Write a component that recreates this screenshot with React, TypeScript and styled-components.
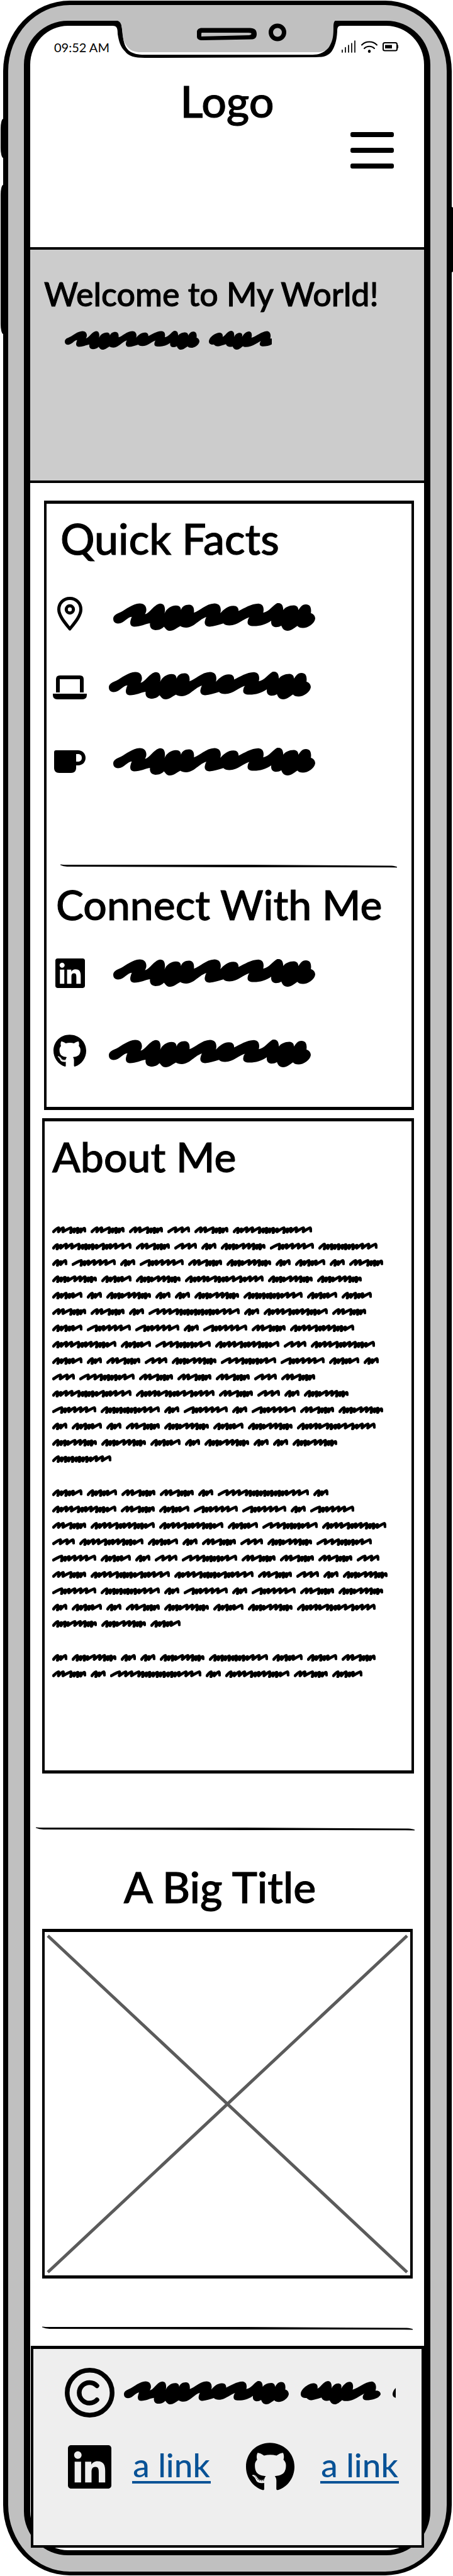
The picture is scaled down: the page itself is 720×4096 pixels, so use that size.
import React from "react";
import styled, { createGlobalStyle } from "styled-components";
import { FaGithub, FaLinkedin } from "react-icons/fa";

const INK = "#000";
const LINK = "#085296";

const GlobalStyle = createGlobalStyle`
  *, *::before, *::after { box-sizing: border-box; }
  body {
    margin: 0;
    background: #fff;
    color: ${INK};
    font-family: Lato, "Liberation Sans", sans-serif;
  }
  h1, h2, p, ul { margin: 0; padding: 0; }
  ul { list-style: none; }
  svg { display: block; flex: none; }
`;

/* ---------- device ---------- */

const Stage = styled.div`
  position: relative;
  padding: 1px 2px 1px 5px;
`;

const Phone = styled.div`
  position: relative;
  padding: 25px 26px 26px 25px;
  border: solid ${INK};
  border-width: 7px 8px 6px;
  border-radius: 106px / 112px;
  background: #c0c0c0;
`;

const SideButton = styled.span<{ $side: "left" | "right"; $top: number; $length: number }>`
  position: absolute;
  ${(p) => p.$side}: ${(p) => (p.$side === "left" ? 1 : 0)}px;
  top: ${(p) => p.$top}px;
  width: 10px;
  height: ${(p) => p.$length}px;
  border-radius: ${(p) => (p.$side === "left" ? "4px 0 0 4px / 16px 0 0 16px" : "0 2px 2px 0")};
  background: ${INK};
`;

const Screen = styled.div`
  position: relative;
  border: solid ${INK};
  border-width: 8px 10px;
  border-radius: 70px;
  background: #fff;
`;

const NotchShape = styled.svg`
  position: absolute;
  top: -9px;
  left: 50%;
  margin-left: -185px;
`;

function Notch() {
  return (
    <NotchShape width="370" height="62" viewBox="0 0 370 62" aria-hidden="true">
      <path
        d="M6 1 C13 1 17 5 18 13 L20 30 C23 48 32 55 54 55 L321 55 C340 55 349 44 352 26 L354 1 L366 1 L366 9 C361 9 360 12 360 18 C359 34 356 42 351 50 C345 57 339 59 325 59 L54 60 C38 60 28 57 23 50 C15 42 13 34 11 22 C11 13 10 9 3 9 Z"
        fill={INK}
      />
      <path d="M8 0 C17 2 17 8 18 15 C19 26 20 34 24 39 C30 49 38 51 48 51 L329 51 C338 51 345 48 349 39 C353 32 354 24 354 12 C354 4 355 2 358 0 Z" fill="#c0c0c0" />
      <path
        d="M145 12.5 H221 C229 12.5 232 16 232 22 C232 28 229 30 225 30.500 L146 32 C140 32 137 30 137 26 V19 C137 15 140 12.500 145 12.500 Z M145 20 C144 20 144 21 144 23 V26 L220 24 C225 23 225 20 219 20 Z"
        fill={INK}
        fillRule="evenodd"
      />
      <ellipse cx="265" cy="19.500" rx="10.500" ry="10.500" fill="none" stroke={INK} strokeWidth="7" />
    </NotchShape>
  );
}

/* ---------- header ---------- */

const StatusBar = styled.div`
  display: flex;
  justify-content: space-between;
  align-items: center;
  height: 68px;
  padding: 0 41px 0 38px;
`;

const Clock = styled.time`
  font-size: 20px;
  line-height: 24px;
`;

function StatusIcons() {
  return (
    <svg width="90" height="22" viewBox="0 0 90 22" role="img" aria-label="Signal, wifi and battery">
      <g stroke={INK} strokeWidth="1.7" fill="none" strokeLinecap="round">
        <path d="M1 19V15.500M6 19V11.500M11 19V8M16 19V5M21 19V1" />
        <path d="M32 7.500C38 .8 50 .8 56 7.500M36 13C40 8.500 48 8.500 52 13" strokeWidth="2" />
        <rect x="66" y="4" width="22" height="12.500" rx="2.500" strokeWidth="2" />
        <path d="M89 8.500V12" strokeWidth="2" />
      </g>
      <ellipse cx="44" cy="17.500" rx="2.200" ry="2.500" fill={INK} />
      <rect x="69" y="7.500" width="11" height="5.500" fill={INK} />
    </svg>
  );
}

const Header = styled.header`
  display: flex;
  flex-direction: column;
  padding-bottom: 125px;
`;

const Logo = styled.h1`
  margin-top: 11px;
  font-size: 70px;
  line-height: 80px;
  font-weight: 500;
  text-align: center;
  -webkit-text-stroke: 1px currentColor;
`;

const MenuButton = styled.button`
  display: flex;
  flex-direction: column;
  justify-content: space-between;
  align-self: flex-end;
  width: 69px;
  height: 58px;
  margin: 10px 48px 0 0;
  padding: 0;
  border: 0;
  background: none;
`;

const MenuBar = styled.span`
  height: 8px;
  border-radius: 3px;
  background: ${INK};
`;

/* ---------- headings ---------- */

const Heading = styled.h2<{ $size?: number; $line?: number; $indent?: number }>`
  padding-left: ${(p) => p.$indent ?? 0}px;
  font-size: ${(p) => p.$size ?? 66}px;
  line-height: ${(p) => p.$line ?? 80}px;
  font-weight: 500;
  white-space: nowrap;
  -webkit-text-stroke: 1px currentColor;
`;

/* ---------- scribbles ---------- */

const LONG_SCRIBBLE =
  "M398 200C398 180 418 172 440 162C470 146 505 114 545 112C575 112 585 135 582 155C580 165 575 172 575 174C600 172 625 116 660 113C685 113 690 140 684 170C692 145 720 124 748 124C768 124 774 135 776 150C780 130 800 118 822 119C845 121 850 140 848 165C880 155 915 114 962 112C995 113 1002 140 995 168C1015 145 1035 126 1068 125C1090 125 1098 140 1096 155C1130 140 1165 114 1208 113C1235 116 1240 140 1234 165C1265 162 1290 120 1312 110C1335 108 1345 120 1346 150C1355 135 1380 123 1405 123C1422 124 1430 135 1430 150C1440 135 1450 117 1472 117C1495 117 1504 135 1500 168C1515 172 1524 185 1524 200C1520 230 1480 255 1455 254C1440 254 1432 250 1425 242C1405 255 1390 270 1370 270C1350 270 1340 255 1335 240C1325 247 1315 249 1305 249C1285 248 1276 235 1279 212C1250 235 1210 244 1180 243C1155 243 1143 235 1148 212C1150 200 1155 195 1157 192C1125 200 1090 240 1045 239C1030 239 1020 235 1012 227C985 235 960 245 935 246C908 246 905 225 910 210C912 200 916 193 917 191C880 200 850 250 805 252C790 252 780 248 772 243C750 255 735 270 715 270C695 270 690 255 680 246C670 260 650 266 633 266C610 265 600 250 603 226C575 230 550 246 515 246C492 245 490 225 495 208C498 196 500 192 502 189C475 190 460 227 425 228C405 227 398 215 398 200Z";

const SHORT_SCRIBBLE =
  "M1042 665C1044 640 1068 616 1085 614C1098 614 1102 625 1100 640C1112 632 1120 606 1136 603C1148 604 1150 620 1149 640C1153 624 1163 614 1174 615C1184 617 1184 628 1182 640C1190 622 1200 607 1212 607C1224 609 1225 628 1222 645C1245 636 1262 608 1288 605C1302 607 1306 630 1301 650C1312 648 1319 656 1319 668C1316 685 1290 698 1268 697C1255 696 1254 680 1262 665C1240 680 1225 701 1198 701C1192 701 1188 699 1186 696C1178 704 1170 717 1160 717C1148 716 1146 706 1142 698C1134 702 1118 702 1114 684C1104 688 1090 696 1080 697C1070 697 1068 692 1062 686C1050 688 1041 680 1042 665Z";

function LongScribble({ width, height }: { width: number; height: number }) {
  return (
    <svg width={width} height={height} viewBox="398 110 1126 160" preserveAspectRatio="none" aria-hidden="true">
      <path d={LONG_SCRIBBLE} fill={INK} />
    </svg>
  );
}

function ShortScribble({ width, height, visible = 277 }: { width: number; height: number; visible?: number }) {
  return (
    <svg width={width} height={height} viewBox={`1042 603 ${visible} 114`} preserveAspectRatio="none" aria-hidden="true">
      <path d={SHORT_SCRIBBLE} fill={INK} />
    </svg>
  );
}

const ScribbleRow = styled.div<{ $gap: number }>`
  display: flex;
  align-items: center;
  gap: ${(p) => p.$gap}px;
`;

/* Distances between the peaks of each kind of scribbled word. */
const WORDS: Record<string, { width: number; steps: number[] }> = {
  A: { width: 54, steps: [30, 27, 45, 20, 20, 18, 20] },
  B: { width: 36, steps: [42, 40, 35] },
  C: { width: 126, steps: [22, 20, 30, 32, 40, 22, 18, 18, 20, 22, 38, 20, 20, 30, 40, 38] },
  D: { width: 24, steps: [26, 20, 28] },
  E: { width: 71, steps: [26, 20, 22, 18, 40, 32, 28, 20, 18, 20] },
  F: { width: 70, steps: [48, 20, 22, 33, 35, 33, 45] },
  G: { width: 94, steps: [28, 20, 22, 18, 22, 22, 18, 20, 22, 22, 32, 35, 40] },
  H: { width: 48, steps: [26, 20, 26, 20, 20, 42] },
  I: { width: 145, steps: [45, 35, 32, 40, 22, 20, 18, 20, 22, 18, 20, 22, 20, 18, 22, 38, 32, 42] },
  J: { width: 102, steps: [26, 20, 28, 30, 40, 22, 20, 30, 32, 20, 20, 22, 40] },
  K: { width: 88, steps: [42, 38, 34, 20, 20, 18, 22, 20, 30, 42] },
  L: { width: 125, steps: [26, 20, 20, 28, 20, 40, 20, 22, 18, 34, 38, 22, 28, 30, 30] },
};

const PARAGRAPHS = [
  [
    "AAABAC", "CABDEFG", "DFDFAEDHDA", "EHELEE", "HDEDDEGHH", "AADIDJA", "HFFDFAJ", "JHKJBJ",
    "HDABEKFHD", "BKAAABA", "CLABDE", "FGDFDFAE", "DHDAEHEL", "EEHDEDDE", "G",
  ],
  ["HHAADID", "JAHFFDF", "AJJHKJ", "BJHDABEK", "FHDBKAAAB", "ACCABDE", "FGDFDFAE", "DHDAEHEL", "EEH"],
  ["DEDDEGHHA", "ADIDJAH"],
];

function wordPath(kind: string) {
  const { width, steps } = WORDS[kind];
  const total = steps.reduce((a, b) => a + b, 0);
  const unit = (width - 5) / total;
  let x = 2;
  let d = "M2 8.5";
  steps.forEach((step, i) => {
    const px = x + step * unit;
    const tight = step < 24;
    const top = tight ? 3 + (i % 2) : 2.4;
    const next = steps[i + 1] ?? 0;
    const low = next === 0 ? 7.5 : next < 24 ? 10 - (i % 2) : 8.6;
    d += `Q${(px - 2).toFixed(1)} ${top} ${px.toFixed(1)} ${top}`;
    d += `Q${(px + 1).toFixed(1)} ${top + 1} ${(px - (next ? 0.4 : -1)).toFixed(1)} ${low}`;
    x = px;
  });
  return d;
}

const Copy = styled.div`
  display: flex;
  flex-direction: column;
  gap: 28px;
  margin-top: 64px;
`;

const Line = styled.div`
  display: flex;
  align-items: center;
  gap: 7px;
  height: 26px;
`;

function Word({ kind }: { kind: string }) {
  const { width } = WORDS[kind];
  return (
    <svg width={width} height="12" viewBox={`0 0 ${width} 12`} aria-hidden="true">
      <path d={wordPath(kind)} fill="none" stroke={INK} strokeWidth="4.6" strokeLinecap="round" strokeLinejoin="round" />
    </svg>
  );
}

/* ---------- sections ---------- */

const Hero = styled.section`
  padding: 40px 0 208px 22px;
  border: solid ${INK};
  border-width: 4px 0;
  background: #ccc;
`;

const HeroNote = styled.div`
  margin: 29px 0 0 33px;
`;

const Card = styled.section<{ $left: number; $top: number }>`
  margin: ${(p) => p.$top}px 16px 0 ${(p) => p.$left}px;
  border: solid ${INK};
  border-width: 5px 4px;
`;

const FactsCard = styled(Card)`
  padding: 15px 23px 63px 10px;
`;

const AboutCard = styled(Card)`
  padding: 16px 12px 140px;
`;

const Fact = styled.li<{ $space: number; $align: string; $indent: number }>`
  display: flex;
  align-items: ${(p) => p.$align};
  gap: ${(p) => p.$indent}px;
  height: 54px;
  margin-top: ${(p) => p.$space}px;
`;

const FactIcon = styled.span`
  display: flex;
  justify-content: center;
  width: 54px;
`;

const RuleBox = styled.div<{ $margin: string }>`
  margin: ${(p) => p.$margin};
`;

function Rule({ margin }: { margin: string }) {
  return (
    <RuleBox $margin={margin} role="separator">
      <svg width="100%" height="6" viewBox="0 0 600 6" preserveAspectRatio="none">
        <path d="M0 0.500 Q6 1 12 1 L330 1 L590 2.500 Q597 3 600 4.200 V5.500 L586 5.200 L330 5 L12 4 Q5 3.500 0 1.500Z" fill={INK} />
      </svg>
    </RuleBox>
  );
}

const Title = styled(Heading)`
  margin-top: 49px;
  padding-right: 23px;
  text-align: center;
`;

const Placeholder = styled.div`
  margin: 27px 18px 0 19px;
  border: solid ${INK};
  border-width: 5px 4px;
  padding: 3px 3px 2px;

  svg {
    width: 100%;
    height: auto;
  }
`;

const Footer = styled.footer`
  position: relative;
  margin: 25px 0 4px 1px;
  padding: 30px 20px 86px 50px;
  border: solid ${INK};
  border-width: 5px 4px 4px;
  background: #eee;
`;

const Copyright = styled.div`
  display: flex;
  align-items: center;
  gap: 15px;
`;

const Clipped = styled.div`
  width: 432px;
  overflow: hidden;
`;

const Social = styled.nav`
  display: flex;
  align-items: center;
  gap: 56px;
  margin-top: 40px;
  padding-left: 5px;
`;

const SocialItem = styled.div<{ $gap: number }>`
  display: flex;
  align-items: center;
  gap: ${(p) => p.$gap}px;
`;

const Link = styled.a`
  width: 125px;
  margin-bottom: 4px;
  border-bottom: 4px solid ${LINK};
  color: ${LINK};
  font-size: 53px;
  line-height: 52px;
  font-weight: 500;
  text-align: center;
  text-decoration: none;
  white-space: nowrap;
`;

/* ---------- icons ---------- */

function PinIcon() {
  return (
    <svg width="40" height="54" viewBox="0 0 40 54" fill="none" stroke={INK} strokeWidth="5" strokeLinejoin="round">
      <path d="M20 2.500C10 2.500 2.500 10 2.500 20C2.500 30 12 41 20 51C28 41 37.500 30 37.500 20C37.500 10 30 2.500 20 2.500Z" />
      <circle cx="20" cy="20" r="5.700" />
    </svg>
  );
}

function LaptopIcon() {
  return (
    <svg width="54" height="38" viewBox="0 0 54 38">
      <path d="M5 27V6Q5 0 11 0H43Q49 0 49 6V27H43V6H11V27Z" fill={INK} />
      <path d="M0 29H54V31Q54 38 47 38H7Q0 38 0 31Z" fill={INK} />
    </svg>
  );
}

function MugIcon() {
  return (
    <svg width="50" height="36" viewBox="0 0 50 36">
      <path d="M3 0H38C45 0 50 5 50 12S45 24 38 24H35V28C35 33 32 36 27 36H8C3 36 0 33 0 28V3Q0 0 3 0ZM35 6V18H38C42 18 44 15.500 44 12S42 6 38 6Z" fill={INK} fillRule="evenodd" />
    </svg>
  );
}

function LinkedInMark({ size }: { size: number }) {
  return <FaLinkedin viewBox="0 32 448 448" size={size} aria-hidden="true" />;
}

function GitHubMark({ size }: { size: number }) {
  return <FaGithub viewBox="0 6 496 496" size={size} aria-hidden="true" />;
}

function CopyrightIcon() {
  return (
    <svg width="79" height="79" viewBox="0 0 79 79" fill="none" stroke={INK} strokeWidth="7.500" role="img" aria-label="Copyright">
      <circle cx="39.500" cy="39.500" r="35.700" />
      <path d="M51 28.500A16.300 16.300 0 1 0 51 51" strokeLinecap="round" />
    </svg>
  );
}

/* ---------- page ---------- */

const FACTS = [
  { icon: <PinIcon />, space: 53, align: "flex-end", indent: 42 },
  { icon: <LaptopIcon />, space: 55, align: "flex-end", indent: 35 },
  { icon: <MugIcon />, space: 72, align: "center", indent: 42 },
];

const CONTACTS = [
  { icon: <LinkedInMark size={47} />, space: 42, align: "center", indent: 42 },
  { icon: <GitHubMark size={52} />, space: 69, align: "flex-end", indent: 35 },
];

function FactList({ items }: { items: typeof FACTS }) {
  return (
    <ul>
      {items.map((item, i) => (
        <Fact key={i} $space={item.space} $align={item.align} $indent={item.indent}>
          <FactIcon>{item.icon}</FactIcon>
          <LongScribble width={321} height={44} />
        </Fact>
      ))}
    </ul>
  );
}

export default function App() {
  return (
    <>
      <GlobalStyle />
      <Stage>
        <SideButton $side="left" $top={189} $length={62} />
        <SideButton $side="left" $top={294} $length={237} />
        <SideButton $side="right" $top={329} $length={104} />
        <Phone>
          <Screen>
            <Notch />
            <Header>
              <StatusBar>
                <Clock>09:52 AM</Clock>
                <StatusIcons />
              </StatusBar>
              <Logo>Logo</Logo>
              <MenuButton aria-label="Menu">
                <MenuBar />
                <MenuBar />
                <MenuBar />
              </MenuButton>
            </Header>

            <Hero>
              <Heading $size={52} $line={60}>Welcome to My World!</Heading>
              <HeroNote>
                <ScribbleRow $gap={15}>
                  <LongScribble width={214} height={30} />
                  <ShortScribble width={100} height={30} visible={266} />
                </ScribbleRow>
              </HeroNote>
            </Hero>

            <FactsCard $left={22} $top={28}>
              <Heading $size={68} $indent={12}>Quick Facts</Heading>
              <FactList items={FACTS} />
              <Rule margin="136px 0 18px 12px" />
              <Heading $indent={5}>Connect With Me</Heading>
              <FactList items={CONTACTS} />
            </FactsCard>

            <AboutCard $left={19} $top={13}>
              <Heading>About Me</Heading>
              <Copy>
                {PARAGRAPHS.map((lines, p) => (
                  <div key={p}>
                    {lines.map((line, l) => (
                      <Line key={l}>
                        {line.split("").map((kind, w) => (
                          <Word key={w} kind={kind} />
                        ))}
                      </Line>
                    ))}
                  </div>
                ))}
              </Copy>
            </AboutCard>

            <Rule margin="85px 15px 0 9px" />
            <Title $size={68}>A Big Title</Title>
            <Placeholder>
              <svg viewBox="0 0 575 541" role="img" aria-label="Image placeholder">
                <path d="M2 3L573 538M573 3L2 538" stroke="#5b5b5b" strokeWidth="5" />
              </svg>
            </Placeholder>
            <Rule margin="76px 18px 0 19px" />

            <Footer>
              <Copyright>
                <CopyrightIcon />
                <Clipped>
                  <ScribbleRow $gap={19}>
                    <LongScribble width={262} height={37} />
                    <ShortScribble width={127} height={37} />
                    <ShortScribble width={127} height={37} />
                  </ScribbleRow>
                </Clipped>
              </Copyright>
              <Social>
                <SocialItem $gap={33}>
                  <LinkedInMark size={69} />
                  <Link href="#linkedin">a link</Link>
                </SocialItem>
                <SocialItem $gap={41}>
                  <GitHubMark size={77} />
                  <Link href="#github">a link</Link>
                </SocialItem>
              </Social>
            </Footer>
          </Screen>
        </Phone>
      </Stage>
    </>
  );
}
